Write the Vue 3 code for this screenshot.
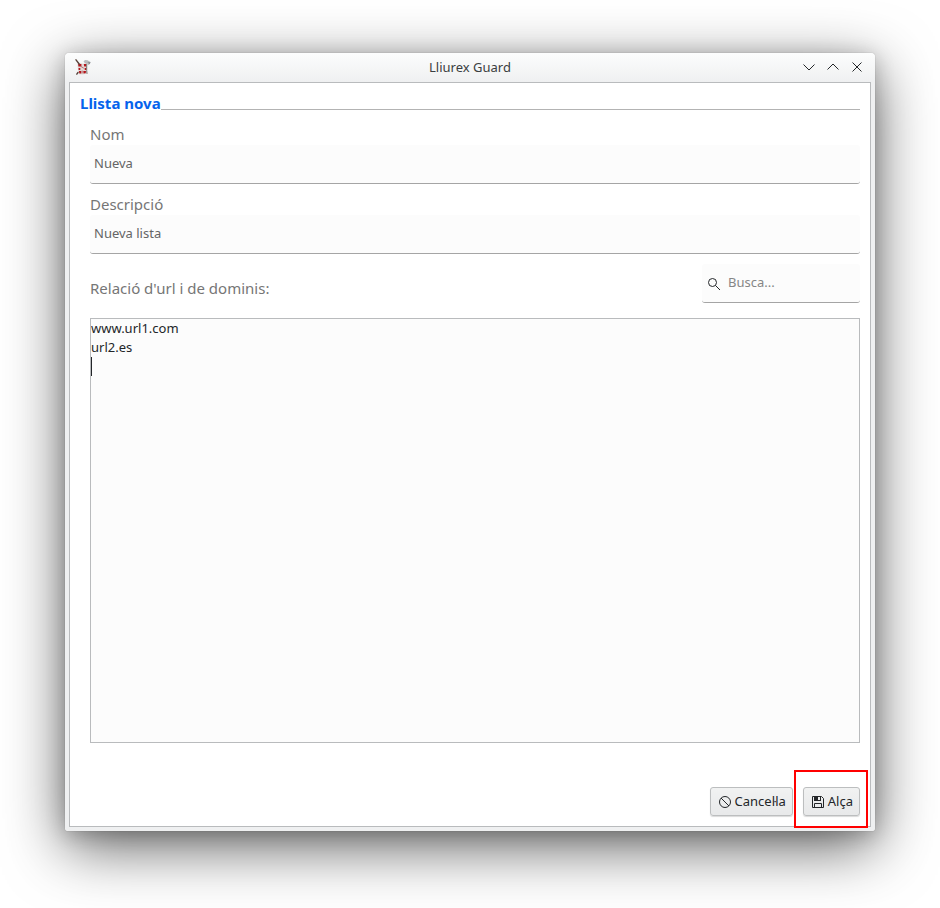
<script setup>
import { computed, ref } from 'vue'

const name = ref('Nueva')
const description = ref('Nueva lista')
const search = ref('')
const urls = ref('www.url1.com\nurl2.es\n')

const LINE_HEIGHT = 19
const caretTop = computed(() => (urls.value.split('\n').length - 1) * LINE_HEIGHT)
</script>

<template>
  <div class="desktop" lang="ca">
    <main class="window">
      <header class="titlebar">
        <svg class="app-icon" viewBox="0 0 16 16" aria-hidden="true">
          <path d="M2.500 4.500 5 4l3 .8 3.500-.6.300 4-.4 6.300-3.400 1-4-.3-1-4z" fill="#e2d9d7" />
          <path d="M3.200 5h3.200v2.600H3.400zM8.800 4.900h2.300v2.600H9.200zM3.500 9h1.800v2H3.600zM9.600 9h1.700v2H9.800zM3.800 12h2.500v2.400H4.400zM8.300 12h2.700l-.3 2.200-2.200.4z" fill="#b3161c" />
          <path d="M6 7.500 8.500 9M7.200 12v2" stroke="#b97073" stroke-width="1" fill="none" />
          <path d="M1 .8 4.200 5M3 13.500l-1.200 1.600" stroke="#57423a" stroke-width="1.400" fill="none" />
          <path d="M11.700 5v6.500l.3 3" stroke="#77706d" stroke-width="1" fill="none" />
          <path d="M8.500 2.500 10 1l2.500.3L15.500 3l-.6 2-2 1.200-.7-1.700-2.200-.3z" fill="#b9bcbe" />
          <path d="M12.500 3.500 15.500 3l-.8 2.300z" fill="#85898b" />
        </svg>
        <h1 class="window-title">Lliurex Guard</h1>
        <div class="window-controls">
          <button type="button" aria-label="Minimitza">
            <svg viewBox="0 0 16 16"><path d="m2.500 5.500 5.500 5.500 5.500-5.500" /></svg>
          </button>
          <button type="button" aria-label="Maximitza">
            <svg viewBox="0 0 16 16"><path d="M2.500 10.500 8 5l5.500 5.500" /></svg>
          </button>
          <button type="button" aria-label="Tanca">
            <svg viewBox="0 0 16 16"><path d="m3.500 3.500 9 9m0-9-9 9" /></svg>
          </button>
        </div>
      </header>

      <form class="client" @submit.prevent>
        <h2 class="group-title"><span>Llista nova</span></h2>

        <div class="group">
          <div class="field">
            <label for="name">Nom</label>
            <input id="name" v-model="name" class="line-input" type="text" />
          </div>
          <div class="field">
            <label for="description">Descripció</label>
            <input id="description" v-model="description" class="line-input" type="text" />
          </div>

          <div class="list-head">
            <label for="urls">Relació d'url i de dominis:</label>
            <div class="search">
              <svg viewBox="0 0 16 16" aria-hidden="true">
                <circle cx="6.500" cy="6.500" r="4" />
                <path d="m9.500 9.500 4.500 4.500" />
              </svg>
              <input v-model="search" class="line-input" type="text" placeholder="Busca..." aria-label="Busca" />
            </div>
          </div>

          <div class="editor">
            <textarea id="urls" v-model="urls" spellcheck="false"></textarea>
            <span class="caret" :style="{ top: caretTop + 'px' }"></span>
          </div>
        </div>

        <footer class="actions">
          <button type="button" class="push">
            <svg viewBox="0 0 16 16" aria-hidden="true">
              <circle cx="8" cy="8" r="5.500" />
              <path d="m4 4 8 8" />
            </svg>
            Cancel·la
          </button>
          <div class="marked">
            <button type="submit" class="push">
              <svg viewBox="0 0 16 16" aria-hidden="true">
                <path d="M2.500 2.500h9l2 2v9h-11z" />
                <path d="M4.500 13.500v-4h7v4" />
                <path class="solid" d="M4 2h7v5H4zM8 3v3h2V3z" fill-rule="evenodd" />
              </svg>
              Alça
            </button>
            <span class="mark"></span>
          </div>
        </footer>
      </form>
    </main>
  </div>
</template>

<style>
body {
  margin: 0;
  background: #fff;
}
</style>

<style scoped>
* {
  box-sizing: border-box;
}

.desktop {
  display: flex;
  min-height: 100vh;
  padding: 53px 65px 77px;
  overflow: hidden;
  font-family: "Noto Sans", sans-serif;
  font-size: 13px;
  line-height: 19px;
  color: #232629;
}

.window {
  flex: 1;
  display: flex;
  flex-direction: column;
  min-width: 0;
  padding: 0 4px 4px;
  border-radius: 4px 4px 3px 3px;
  background: linear-gradient(#fcfdfd, #eff0f1 29px);
  box-shadow: 0 0 1px rgba(0, 0, 0, 0.4), 0 3px 20px rgba(0, 0, 0, 0.2), 0 16px 60px rgba(0, 0, 0, 0.62);
}

.titlebar {
  display: grid;
  grid-template-columns: 1fr auto 1fr;
  align-items: center;
  height: 29px;
  padding: 0 6px 1px;
}

.app-icon {
  width: 16px;
  height: 16px;
}

.window-title {
  margin: 0;
  font-size: 13px;
  font-weight: 400;
  color: #3a3e41;
}

.window-controls {
  display: flex;
  justify-content: flex-end;
  gap: 8px;
}

.window-controls button {
  display: flex;
  padding: 0;
  border: 0;
  background: none;
}

svg {
  flex: none;
  width: 16px;
  height: 16px;
  fill: none;
  stroke: #232629;
  stroke-width: 1;
}

.app-icon path {
  stroke-linecap: round;
}

.app-icon path[fill]:not([fill="none"]) {
  stroke: none;
}

.solid {
  fill: #232629;
  stroke: none;
}

.client {
  flex: 1;
  display: flex;
  flex-direction: column;
  padding: 10px;
  border: 1px solid #b9bbbd;
  background: #fff;
}

.group-title {
  display: flex;
  margin: 0;
  font-size: 15px;
  line-height: 21px;
  font-weight: 700;
  color: #0563ec;
}

.group-title::after {
  content: "";
  flex: 1;
  height: 16px;
  border-bottom: 1px solid #b3b3b3;
}

.group {
  flex: 1;
  display: flex;
  flex-direction: column;
  gap: 10px;
  padding: 10px 0 0 10px;
}

label {
  font-size: 15px;
  line-height: 21px;
  color: #767676;
}

.field {
  display: flex;
  flex-direction: column;
}

.line-input {
  width: 100%;
  height: 39px;
  padding: 0 4px 2px;
  border: 0;
  border-bottom: 1px solid #a5a5a5;
  border-radius: 3px;
  outline: 0;
  background: #fcfcfc;
  font: inherit;
  color: #656565;
}

.list-head {
  display: flex;
  align-items: center;
  justify-content: space-between;
  padding-bottom: 5px;
}

.list-head label {
  padding-top: 9px;
}

.search {
  display: grid;
  width: 158px;
  align-items: center;
}

.search svg,
.search input {
  grid-area: 1 / 1;
}

.search svg {
  z-index: 1;
  margin-left: 4px;
}

.search input {
  padding-left: 26px;
}

.search input::placeholder {
  color: #868686;
  opacity: 1;
}

.editor {
  flex: 1;
  position: relative;
  display: flex;
  border: 1px solid #b9bbbd;
  background: #fcfcfc;
}

.editor textarea {
  flex: 1;
  padding: 0;
  border: 0;
  outline: 0;
  resize: none;
  background: none;
  font: inherit;
  color: #232629;
}

.caret {
  position: absolute;
  left: 0;
  width: 1px;
  height: 19px;
  background: #232629;
}

.actions {
  display: flex;
  justify-content: flex-end;
  gap: 10px;
  padding-top: 44px;
}

.push {
  display: flex;
  align-items: center;
  gap: 2px;
  height: 29px;
  padding: 0 6px;
  border: 1px solid #bcbebf;
  border-radius: 3px;
  background: linear-gradient(#f1f2f2, #e8e9ea);
  box-shadow: 0 1px 1px rgba(0, 0, 0, 0.15);
  font: inherit;
  color: #232629;
}

.marked {
  position: relative;
}

.mark {
  position: absolute;
  inset: -17px -8px -12px -9px;
  border: 2px solid #f00;
  pointer-events: none;
}
</style>
